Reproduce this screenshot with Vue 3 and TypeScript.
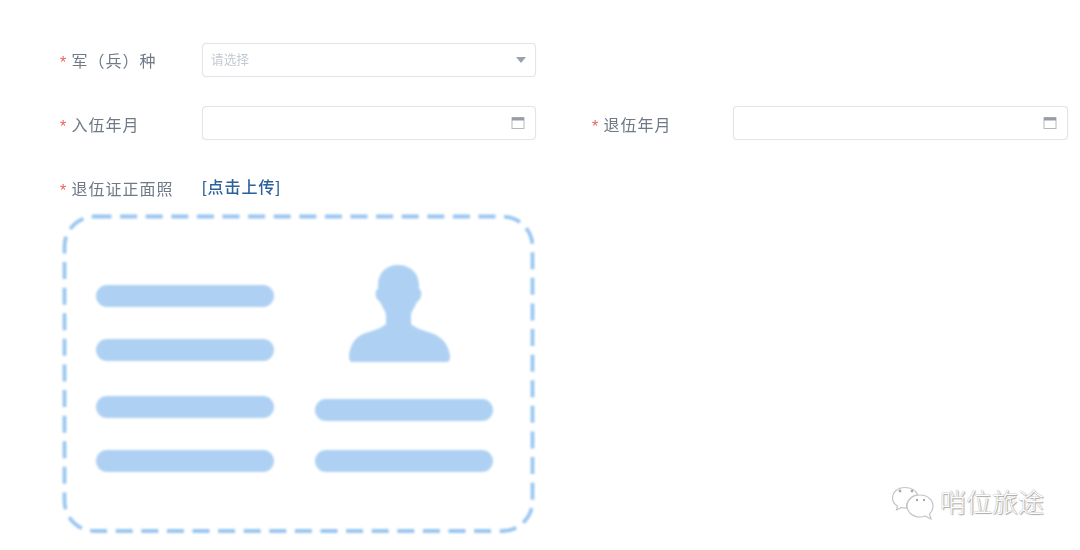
<template>
  <div class="page">
    <div class="form-row">
      <label class="form-label"><i class="star">*</i>军（兵）种</label>
      <div class="input select">
        <span class="placeholder">请选择</span>
        <span class="arrow"></span>
      </div>
    </div>

    <div class="form-row dates">
      <label class="form-label"><i class="star">*</i>入伍年月</label>
      <div class="input date">
        <svg class="cal" width="14" height="14" viewBox="0 0 14 14">
          <rect x="1" y="1.5" width="12" height="11" fill="#fff" stroke="#b4b8bd" stroke-width="1" />
          <rect x="1" y="1.5" width="12" height="3" fill="#979ca3" />
        </svg>
      </div>
      <label class="form-label second"><i class="star">*</i>退伍年月</label>
      <div class="input date wide">
        <svg class="cal" width="14" height="14" viewBox="0 0 14 14">
          <rect x="1" y="1.5" width="12" height="11" fill="#fff" stroke="#b4b8bd" stroke-width="1" />
          <rect x="1" y="1.5" width="12" height="3" fill="#979ca3" />
        </svg>
      </div>
    </div>

    <div class="upload-row">
      <label class="form-label"><i class="star">*</i>退伍证正面照</label>
      <a class="upload-link">[点击上传]</a>
    </div>

    <svg class="card" width="480" height="325" viewBox="60 212 480 325">
      <rect
        x="64.5"
        y="216.5"
        width="468"
        height="314.5"
        rx="30"
        fill="none"
        stroke="#9ac6f1"
        stroke-width="3.8"
        stroke-dasharray="17 8.6"
      />
      <rect
        v-for="bar in bars"
        :key="bar.x + '-' + bar.y"
        :x="bar.x"
        :y="bar.y"
        width="178"
        height="22"
        rx="11"
        fill="#aed1f3"
      />
      <path
        fill="#aed1f3"
        d="M398 265 C386 265 378 273 378 285 L378 289 C375 290 375 296 377 299 C379 301 381 303 382 306 C384 310 386 312 386 316 L386 324 C382 328 372 331 363 334 C354 338 350 346 349 356 C349 360 350 362 353 362 L446 362 C449 362 450 360 450 356 C449 346 443 338 434 334 C425 331 415 328 411 324 L411 316 C411 312 413 310 415 306 C416 303 418 301 420 299 C422 296 422 290 419 289 L419 285 C419 273 410 265 398 265 Z"
      />
    </svg>

    <div class="watermark">
      <svg width="42" height="34" viewBox="892 486 42 34" fill="#fff" stroke="#c4c4c4" stroke-width="1.2">
        <path d="M905 487.500 C897.500 487.500 892.500 492 892.500 498 C892.500 501.500 894.500 504.500 897.500 506 L896.500 510 L901.500 507.500 C903 508 905 508.200 906.500 508.200 C906 501 912 495 917.500 495 C916 490.500 911 487.500 905 487.500 Z" />
        <path d="M920 495 C912.500 495 907 500 907 506 C907 512 912.500 517 920 517 C922 517 923.500 516.700 925 516 L931 519 L929.500 514 C931.500 512 933 509.500 933 506 C933 500 927.500 495 920 495 Z" />
        <circle cx="900" cy="491" r="1.400" fill="#a8a8a8" stroke="none" />
        <circle cx="912" cy="491" r="1.400" fill="#a8a8a8" stroke="none" />
        <circle cx="917" cy="500" r="1.200" fill="#a8a8a8" stroke="none" />
        <circle cx="924" cy="500" r="1.200" fill="#a8a8a8" stroke="none" />
      </svg>
      <span class="mark-text">哨位旅途</span>
    </div>
  </div>
</template>

<script setup lang="ts">
interface Bar {
  x: number
  y: number
}

const bars: Bar[] = [
  { x: 96, y: 285 },
  { x: 96, y: 339 },
  { x: 96, y: 396 },
  { x: 96, y: 450 },
  { x: 315, y: 399 },
  { x: 315, y: 450 }
]
</script>

<style scoped>
.page {
  position: relative;
  box-sizing: border-box;
  width: 1080px;
  height: 550px;
  padding: 43px 0 0 60px;
  overflow: hidden;
  background: #fff;
  font-family: "Liberation Sans", "Noto Sans CJK SC", sans-serif;
}

.form-row {
  display: flex;
  align-items: center;
  height: 34px;
  margin-bottom: 29px;
}

.form-label {
  display: block;
  flex: 0 0 142px;
  font-size: 16px;
  letter-spacing: 1px;
  color: #6f7a86;
  filter: blur(0.5px);
}

.form-label.second {
  flex-basis: 141px;
  margin-left: 56px;
}

.dates .form-label {
  margin-top: 2px;
}

.star {
  display: inline-block;
  width: 11.500px;
  font-style: normal;
  font-size: 16px;
  letter-spacing: 0;
  vertical-align: -1px;
  color: #f0605a;
}

.input {
  box-sizing: border-box;
  display: flex;
  align-items: center;
  justify-content: space-between;
  width: 334px;
  height: 34px;
  padding: 0 9px 0 8px;
  border: 1px solid #e1e4e8;
  border-radius: 4px;
  box-shadow: 0 0 1px #e6e9ec;
  background: #fff;
}

.input.wide {
  width: 335px;
}

.input.date {
  justify-content: flex-end;
  padding-right: 10px;
}

.placeholder {
  margin-top: -3px;
  font-size: 12.700px;
  color: #c4cad2;
  filter: blur(0.5px);
}

.arrow {
  width: 0;
  height: 0;
  margin-top: -1px;
  border-left: 5px solid transparent;
  border-right: 5px solid transparent;
  border-top: 6px solid #9aa3ad;
}

.cal {
  display: block;
  filter: blur(0.4px);
}

.upload-row {
  display: flex;
  align-items: flex-start;
  height: 36px;
  padding-top: 7px;
}

.upload-link {
  margin-top: -2px;
  font-size: 16px;
  font-weight: 500;
  letter-spacing: 1px;
  color: #2c6299;
  filter: blur(0.4px);
}

.card {
  display: block;
  filter: blur(1.1px);
}

.watermark {
  position: absolute;
  left: 892px;
  top: 486px;
  display: flex;
  align-items: flex-start;
  gap: 6px;
}

.mark-text {
  margin-top: -2px;
  font-size: 26px;
  font-weight: 300;
  line-height: 38px;
  color: #fff;
  text-shadow: 0 0 1px #888, 1px 1px 1px #aaa;
}
</style>
